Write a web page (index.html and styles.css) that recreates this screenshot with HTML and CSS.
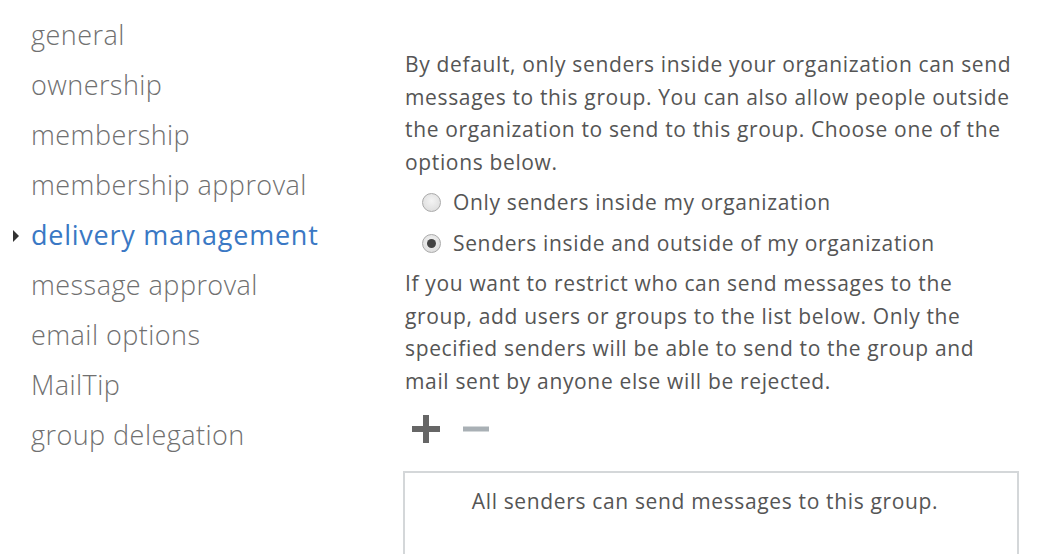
FILE: index.html
```html
<!DOCTYPE html>
<html>
<head>
<meta charset="utf-8">
<link rel="stylesheet" href="styles.css">
</head>
<body>
<div class="page">
  <nav class="nav">
    <div class="nav-item">general</div>
    <div class="nav-item">ownership</div>
    <div class="nav-item">membership</div>
    <div class="nav-item">membership approval</div>
    <div class="nav-item active"><span class="caret"></span>delivery management</div>
    <div class="nav-item">message approval</div>
    <div class="nav-item">email options</div>
    <div class="nav-item">MailTip</div>
    <div class="nav-item">group delegation</div>
  </nav>
  <main class="content">
    <p class="para">By default, only senders inside your organization can send messages to this group. You can also allow people outside the organization to send to this group. Choose one of the options below.</p>
    <div class="radios">
      <label class="radio-row"><span class="radio"></span>Only senders inside my organization</label>
      <label class="radio-row"><span class="radio checked"></span>Senders inside and outside of my organization</label>
    </div>
    <p class="para">If you want to restrict who can send messages to the group, add users or groups to the list below. Only the specified senders will be able to send to the group and mail sent by anyone else will be rejected.</p>
    <div class="toolbar">
      <svg class="icon" width="32" height="32" viewBox="0 0 32 32"><path d="M16 2v28M2 16h28" stroke="#666" stroke-width="6"/></svg>
      <svg class="icon" width="32" height="32" viewBox="0 0 32 32"><path d="M3 16h26" stroke="#a9b0b5" stroke-width="5"/></svg>
    </div>
    <div class="list-box">
      <div class="empty">All senders can send messages to this group.</div>
    </div>
  </main>
</div>
</body>
</html>
```
FILE: styles.css
```css
html, body {
  margin: 0;
  padding: 0;
  background: #fff;
}
body {
  font-family: "Open Sans", "Noto Sans", sans-serif;
  width: 1046px;
  height: 554px;
  overflow: hidden;
}
.page {
  display: flex;
  align-items: flex-start;
}
.nav {
  width: 405px;
  flex: none;
  padding-top: 10px;
}
.nav-item {
  position: relative;
  padding-left: 31px;
  height: 50px;
  line-height: 50px;
  font-size: 27px;
  letter-spacing: 0.45px;
  font-weight: 300;
  color: #707070;
  white-space: nowrap;
}
.nav-item.active {
  color: #3a78c4;
  font-weight: 400;
  letter-spacing: 0.75px;
}
.caret {
  position: absolute;
  left: 13px;
  top: 20px;
  width: 0;
  height: 0;
  border-left: 6px solid #333;
  border-top: 6px solid transparent;
  border-bottom: 6px solid transparent;
}
.content {
  width: 614px;
  padding-top: 48px;
  color: #555;
  font-size: 21px;
  letter-spacing: 0.65px;
  line-height: 32.5px;
}
.para {
  margin: 0;
}
.radios {
  padding: 4px 0 3px 17px;
}
.radio-row {
  display: flex;
  align-items: center;
  height: 41px;
}
.radio {
  box-sizing: border-box;
  width: 19px;
  height: 19px;
  border-radius: 50%;
  border: 1px solid #aaa;
  background: radial-gradient(circle at 50% 40%, #f4f4f4, #d8d8d8);
  margin-right: 12px;
  position: relative;
  flex: none;
}
.radio.checked::after {
  content: "";
  position: absolute;
  left: 4px;
  top: 4px;
  width: 9px;
  height: 9px;
  border-radius: 50%;
  background: #444;
}
.toolbar {
  display: flex;
  gap: 18px;
  padding: 16px 0 0 5px;
  height: 40px;
}
.list-box {
  margin-top: 18px;
  margin-left: -2px;
  border: 2px solid #d4d7d9;
  height: 120px;
  text-align: center;
}
.empty {
  padding-top: 12px;
  padding-right: 12px;
  font-size: 21px;
  color: #555;
}
```
